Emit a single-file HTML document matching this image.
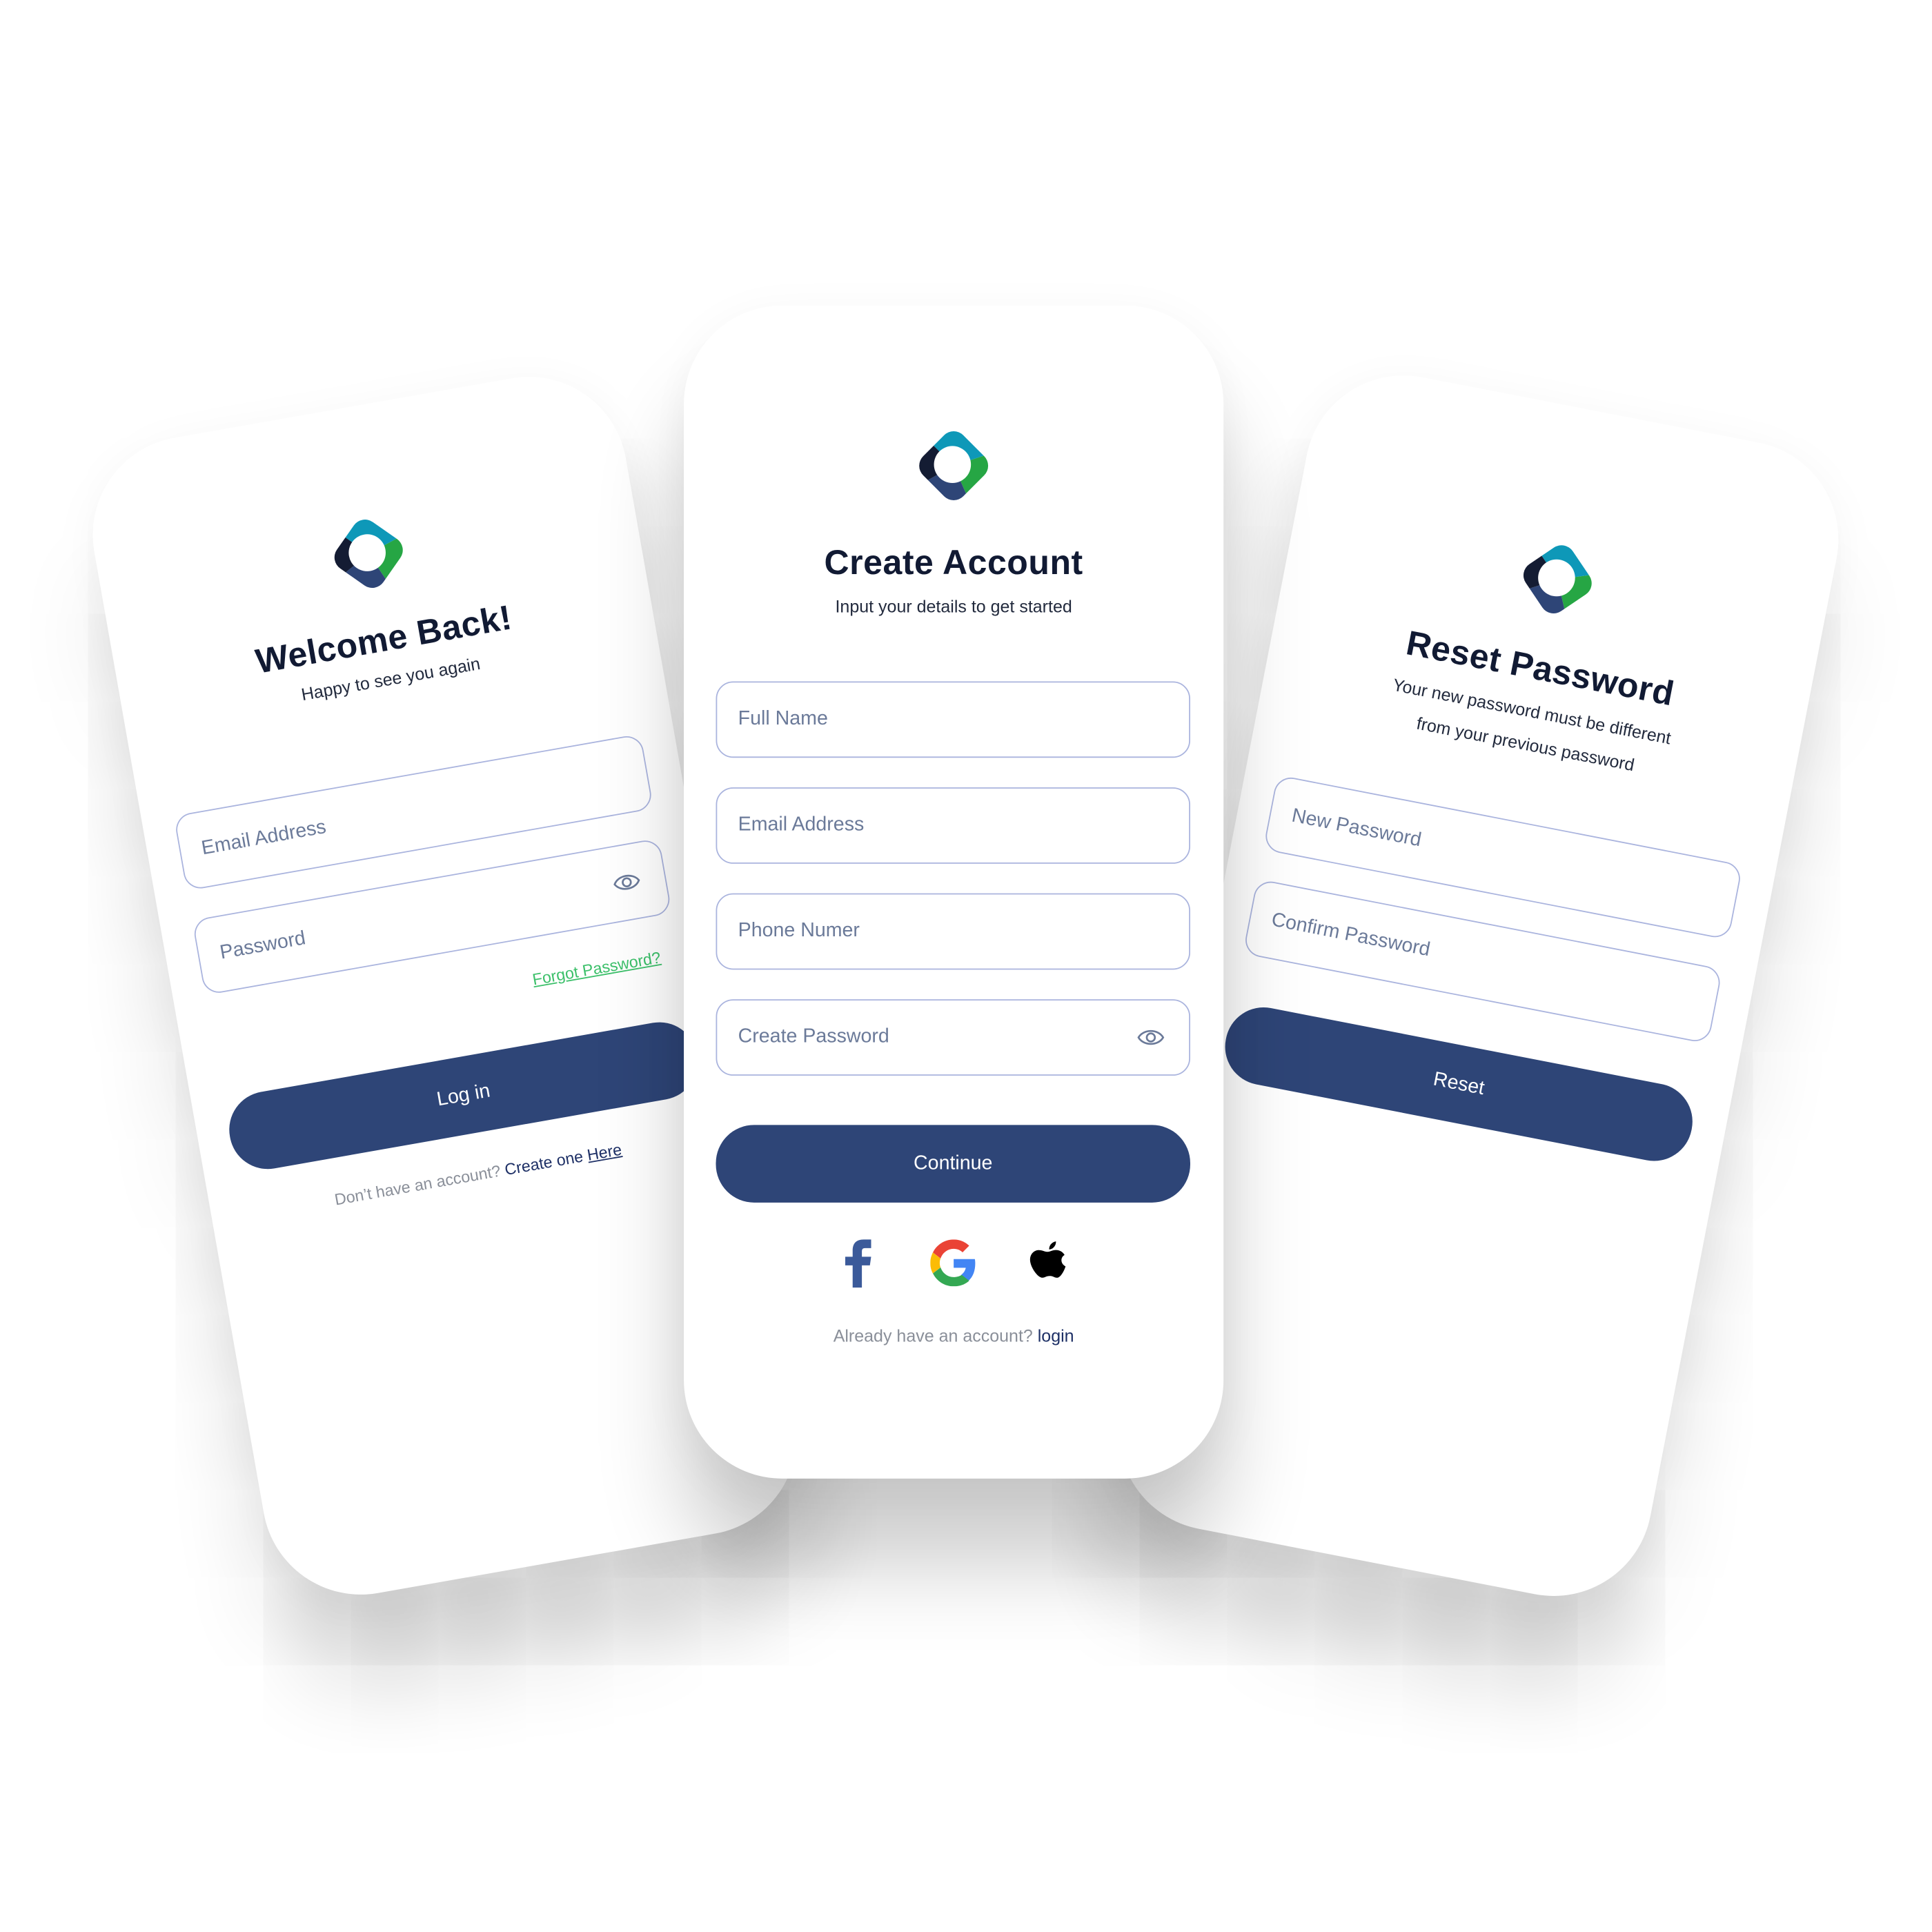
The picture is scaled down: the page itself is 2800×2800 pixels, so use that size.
<!DOCTYPE html>
<html><head><meta charset="utf-8">
<style>
html,body{margin:0;padding:0;background:#fff;}
body{width:2800px;height:2800px;overflow:hidden;position:relative;}
#w{position:absolute;left:0;top:0;width:1568px;height:1568px;transform:scale(1.785714);transform-origin:0 0;font-family:"Liberation Sans",sans-serif;}
.card{position:absolute;width:438px;height:952px;background:#fff;border-radius:80px;box-shadow:0 70px 130px rgba(0,0,0,0.2),0 10px 40px rgba(0,0,0,0.05);}
.logo{position:absolute;left:183px;width:72px;height:72px;}
.title{position:absolute;left:0;right:0;text-align:center;font-weight:bold;font-size:28px;color:#111a33;letter-spacing:0.3px;}
.sub{position:absolute;left:0;right:0;text-align:center;font-size:14px;color:#222a3d;line-height:27px;}
.field{position:absolute;left:26px;border:1.3px solid #aab4de;border-radius:14px;box-sizing:border-box;width:385px;height:62px;font-size:16px;color:#6b7a99;padding-left:17px;line-height:60px;}
.btn{position:absolute;left:26px;width:385px;height:63px;border-radius:31px;background:#2e4577;color:#fff;text-align:center;line-height:63px;font-size:16px;}
.eye{position:absolute;right:20px;top:20px;}
</style></head><body><div id="w">
<svg width="0" height="0" style="position:absolute">
<defs>
<clipPath id="cp"><rect x="13" y="13" width="46" height="46" rx="11" transform="rotate(45 36 36)"/></clipPath>
<g id="lg">
<g clip-path="url(#cp)">
<polygon points="36,36 0,0 72,0 72,24" fill="#0e98b8"/>
<polygon points="36,36 72,24 72,72 52,72" fill="#26a644"/>
<polygon points="36,36 52,72 0,72 0,56" fill="#2e4577"/>
<polygon points="36,36 0,56 0,0" fill="#141c33"/>
</g>
<circle cx="35" cy="35" r="15" fill="#fff"/>
</g>
<g id="eye"><path d="M1 10 C5 3 17 3 21 10 C17 17 5 17 1 10Z" fill="none" stroke="#6b7a99" stroke-width="1.5"/><circle cx="11" cy="10" r="3.3" fill="none" stroke="#6b7a99" stroke-width="1.5"/></g>
</defs></svg>

<!-- left card -->
<div class="card" style="left:142px;top:324px;transform:rotate(-10deg);">
<svg class="logo" style="top:84px" viewBox="0 0 72 72"><use href="#lg"/></svg>
<div class="title" style="top:175px;">Welcome Back!</div>
<div class="sub" style="top:210px;">Happy to see you again</div>
<div class="field" style="top:302px;">Email Address</div>
<div class="field" style="top:388px;">Password<svg class="eye" width="22" height="20"><use href="#eye"/></svg></div>
<div style="position:absolute;left:290px;top:476px;font-size:13px;color:#3cc06a;text-decoration:underline;">Forgot Password?</div>
<div class="btn" style="top:535px;">Log in</div>
<div style="position:absolute;left:0;right:0;top:624px;text-align:center;font-size:13px;color:#8a8f99;">Don’t have an account? <span style="color:#1e3066">Create one <u>Here</u></span></div>
</div>

<!-- right card -->
<div class="card" style="left:981px;top:324px;transform:rotate(11deg);">
<svg class="logo" style="top:104px" viewBox="0 0 72 72"><use href="#lg"/></svg>
<div class="title" style="top:198px;">Reset Password</div>
<div class="sub" style="top:236px;">Your new password must be different<br>from your previous password</div>
<div class="field" style="top:339px;">New Password</div>
<div class="field" style="top:425px;">Confirm Password</div>
<div class="btn" style="top:526px;">Reset</div>
</div>

<!-- center card -->
<div class="card" style="left:555px;top:248px;">
<svg class="logo" style="top:94px" viewBox="0 0 72 72"><use href="#lg"/></svg>
<div class="title" style="top:193px;">Create Account</div>
<div class="sub" style="top:231px;">Input your details to get started</div>
<div class="field" style="top:305px;">Full Name</div>
<div class="field" style="top:391px;">Email Address</div>
<div class="field" style="top:477px;">Phone Numer</div>
<div class="field" style="top:563px;">Create Password<svg class="eye" width="22" height="20"><use href="#eye"/></svg></div>
<div class="btn" style="top:665px;">Continue</div>
<svg style="position:absolute;left:128px;top:757px" width="28" height="40" viewBox="0 0 28 40"><path d="M9 40 V22 H3 V15 H9 V10 C9 4 12 1 18 1 H24 V8 H19 C17 8 16.5 9 16.5 11 V15 H24 L23 22 H16.5 V40Z" fill="#3b5a9a"/></svg>
<svg style="position:absolute;left:200px;top:758px" width="38" height="38" viewBox="0 0 48 48">
<path d="M24 9.5c3.5 0 6.6 1.2 9.1 3.6l6.8-6.8C35.8 2.5 30.3 0 24 0 14.6 0 6.6 5.4 2.7 13.3l7.900 6.1C12.5 13.7 17.8 9.5 24 9.5z" fill="#ea4335"/>
<path d="M46.1 24.5c0-1.6-.1-3.1-.4-4.5H24v9h12.4c-.5 2.9-2.2 5.4-4.7 7.1l7.7 6C43.9 37.9 46.1 31.8 46.1 24.5z" fill="#4285f4"/>
<path d="M10.5 28.6c-.5-1.4-.8-3-.8-4.6s.3-3.2.8-4.6l-7.900-6.100C1 16.6 0 20.2 0 24s.9 7.4 2.6 10.7l7.900-6.100z" fill="#fbbc05"/>
<path d="M24 48c6.5 0 11.900-2.100 15.900-5.800l-7.700-6c-2.200 1.500-5 2.300-8.200 2.300-6.200 0-11.500-4.200-13.400-9.900l-7.900 6.100C6.600 42.600 14.600 48 24 48z" fill="#34a853"/></svg>
<svg style="position:absolute;left:276px;top:755px" width="38" height="42" viewBox="0 0 38 42"><path d="M26 5 C26 8 23.5 11 20.5 11 C20.3 8 22.7 5 26 4.5Z" fill="#000"/><path d="M19 13 C21 13 23 11.5 26 11.5 C29 11.5 31.5 13 33 15.5 C29.5 17.5 29.5 22.5 33.8 24.8 C32.5 29 29.5 34 27 34 C24.5 34 24 32.6 21 32.6 C18 32.6 17 34 15 34 C11 34 5 25 5 19.5 C5 14.5 8.5 11.6 12 11.6 C15 11.6 17 13 19 13Z" fill="#000"/></svg>
<div style="position:absolute;left:0;right:0;top:828px;text-align:center;font-size:14px;color:#8a8f99;">Already have an account? <span style="color:#1e3066">login</span></div>
</div>
</div></body></html>
